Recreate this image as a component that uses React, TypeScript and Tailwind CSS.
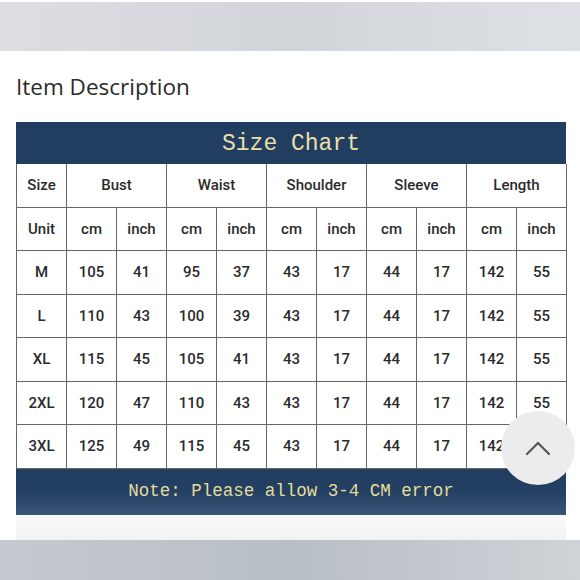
import React from "react";

const rows = [
  ["M", "105", "41", "95", "37", "43", "17", "44", "17", "142", "55"],
  ["L", "110", "43", "100", "39", "43", "17", "44", "17", "142", "55"],
  ["XL", "115", "45", "105", "41", "43", "17", "44", "17", "142", "55"],
  ["2XL", "120", "47", "110", "43", "43", "17", "44", "17", "142", "55"],
  ["3XL", "125", "49", "115", "45", "43", "17", "44", "17", "142", "55"],
];

const groups = ["Bust", "Waist", "Shoulder", "Sleeve", "Length"];

export default function App() {
  const cell = "h-[43.5px] border-r border-b border-[#666] flex items-center justify-center";
  return (
    <div className="w-[580px] h-[580px] bg-white overflow-hidden relative flex flex-col" style={{ fontFamily: "'Open Sans', 'Noto Sans', sans-serif" }}>
      {/* top bar */}
      <div className="h-[49px] mt-[2px] bg-gradient-to-r from-[#dcdee2] via-[#d2d5da] to-[#dde0e4] shrink-0" />

      <div className="px-4 pt-[20px]">
        <h2 className="text-[22.5px] leading-[32px] text-[#2a2a2a]">Item Description</h2>

        <div className="mt-[19px] w-[550px]">
          <div className="h-[42px] bg-[#213e61] flex items-center justify-center">
            <span className="text-[23px] text-[#e9dfa8] mt-[3px]" style={{ fontFamily: "'Liberation Mono', monospace" }}>Size Chart</span>
          </div>

          <div className="border-l border-[#666] text-[15px] font-medium text-[#2b2b2b]" style={{ fontFamily: "Roboto, 'Liberation Sans', Arial, sans-serif" }}>
            <div className="grid grid-cols-[50px_100px_100px_100px_100px_100px]">
              <div className={cell}>Size</div>
              {groups.map((g) => (
                <div key={g} className={cell}>{g}</div>
              ))}
            </div>
            <div className="grid grid-cols-[repeat(11,50px)]">
              <div className={cell}>Unit</div>
              {groups.map((g) => (
                <React.Fragment key={g}>
                  <div className={cell}>cm</div>
                  <div className={cell}>inch</div>
                </React.Fragment>
              ))}
            </div>
            {rows.map((r) => (
              <div key={r[0]} className="grid grid-cols-[repeat(11,50px)]">
                {r.map((v, i) => (
                  <div key={i} className={cell}>{v}</div>
                ))}
              </div>
            ))}
          </div>

          <div className="h-[46px] bg-gradient-to-b from-[#213e61] via-[#233f62] to-[#3b5577] flex items-center justify-center">
            <span className="text-[17.5px] text-[#e6dc9c]" style={{ fontFamily: "'Liberation Mono', monospace" }}>Note: Please allow 3-4 CM error</span>
          </div>
          <div className="h-[28px] bg-gradient-to-b from-[#fafafa] to-[#f1f1f1]" />
        </div>
      </div>

      {/* bottom bar */}
      <div className="absolute left-0 right-0 bottom-0 h-[40px] bg-gradient-to-r from-[#c5cad0] via-[#b8bec5] to-[#cfd3d8]" />

      {/* scroll-up button */}
      <div className="absolute left-[501px] top-[411px] w-[74px] h-[74px] rounded-full bg-[#ececec] flex items-center justify-center">
        <svg width="28" height="16" viewBox="0 0 28 16" fill="none" stroke="#555" strokeWidth="2.2" strokeLinecap="round" strokeLinejoin="round">
          <path d="M3 14 L14 3 L25 14" />
        </svg>
      </div>
    </div>
  );
}
